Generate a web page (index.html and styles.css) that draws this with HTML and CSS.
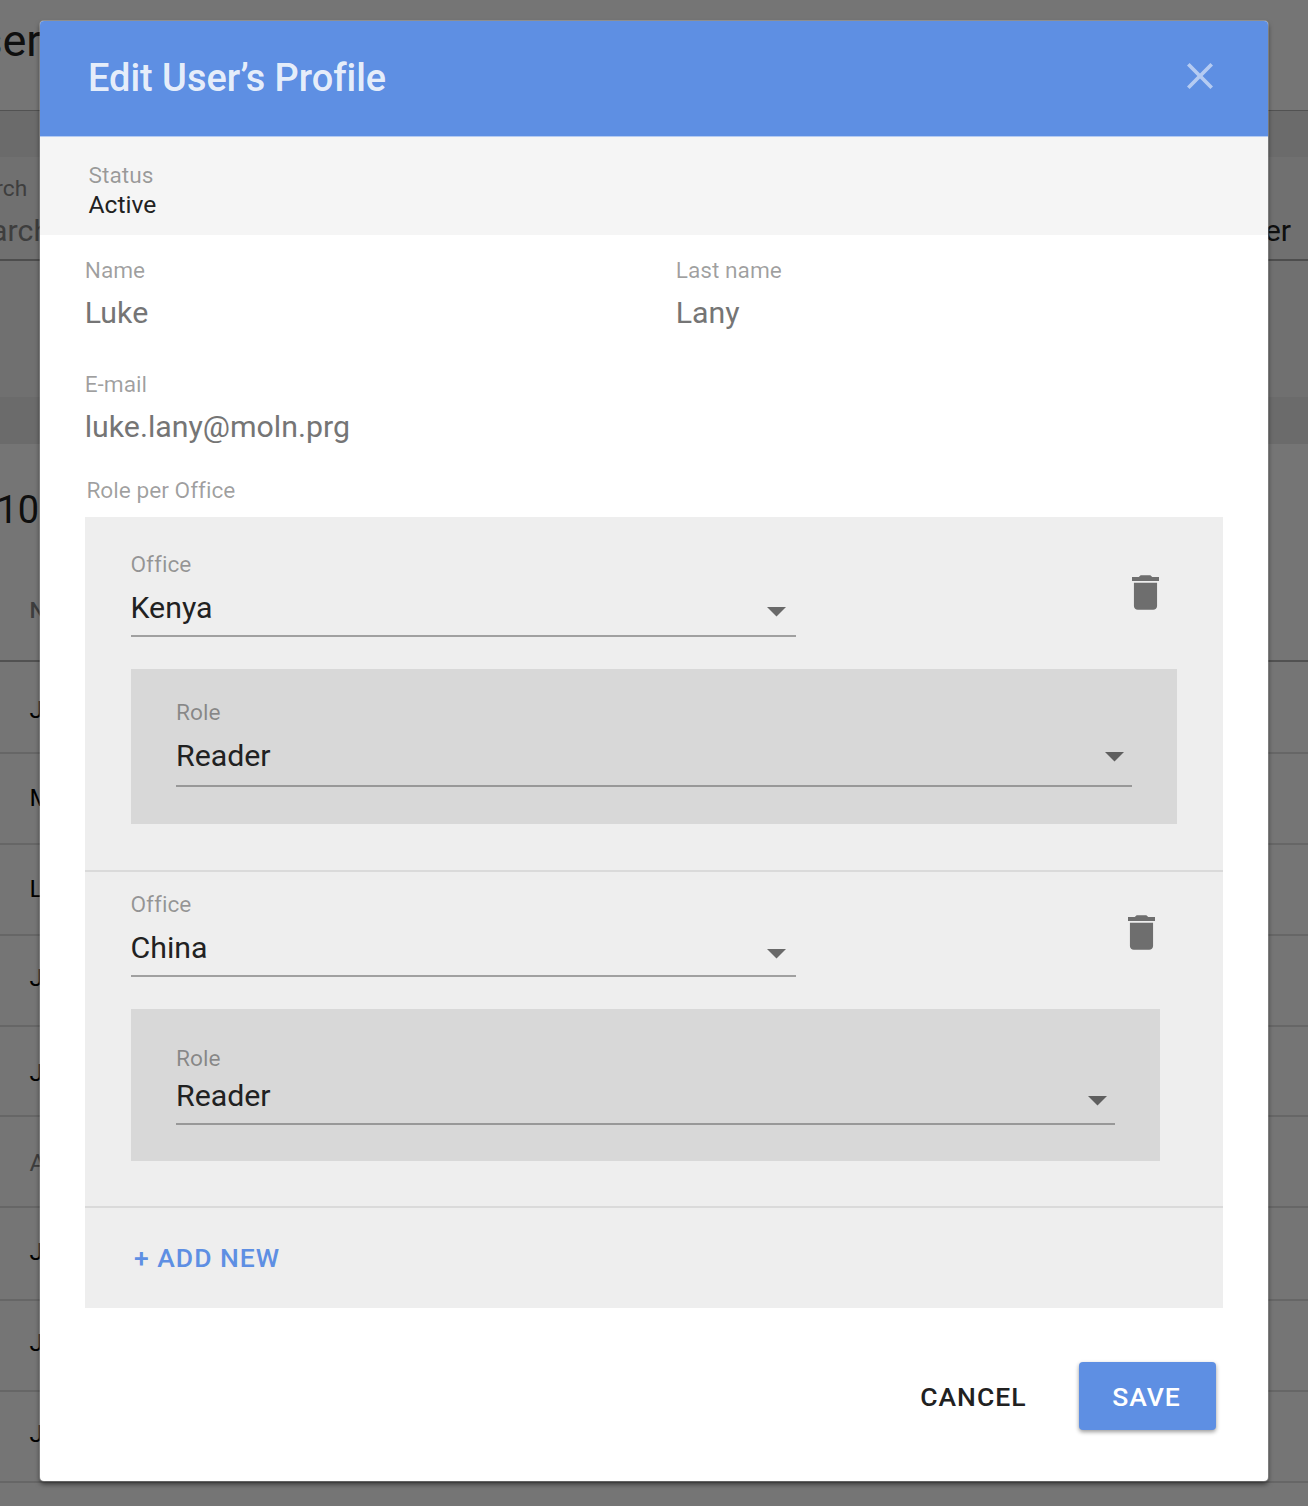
FILE: index.html
```html
<!DOCTYPE html>
<html lang="en">
<head>
<meta charset="utf-8">
<title>Edit User’s Profile</title>
<link rel="stylesheet" href="styles.css">
</head>
<body>
<div class="page" aria-hidden="true">
  <header class="page-header">Users</header>
  <section class="filters">
    <div class="filter-label">Search</div>
    <div class="filter-row"><span>Search</span><span class="filter-user">er</span></div>
  </section>
  <section class="list">
    <div class="list-count">10</div>
    <div class="list-head">N</div>
    <div class="list-row r1">J</div>
    <div class="list-row r2">M</div>
    <div class="list-row r3">L</div>
    <div class="list-row r4">J</div>
    <div class="list-row r5">J</div>
    <div class="list-row r6 muted">A</div>
    <div class="list-row r7">J</div>
    <div class="list-row r8">J</div>
    <div class="list-row r9">J</div>
  </section>
</div>

<div class="overlay">
  <main class="dialog" role="dialog">
    <header class="dialog-header">
      <h1>Edit User’s Profile</h1>
      <svg class="close" viewBox="5 5 14 14"><path d="M19 6.41L17.59 5 12 10.59 6.41 5 5 6.41 10.59 12 5 17.59 6.41 19 12 13.41 17.59 19 19 17.59 13.41 12z"/></svg>
    </header>
    <section class="status">
      <div class="label">Status</div>
      <div class="status-value">Active</div>
    </section>
    <section class="content">
      <div class="names">
        <div><div class="label">Name</div><div class="value">Luke</div></div>
        <div><div class="label">Last name</div><div class="value">Lany</div></div>
      </div>
      <div class="email"><div class="label">E-mail</div><div class="value">luke.lany@moln.prg</div></div>
      <div class="label roles-label">Role per Office</div>
      <div class="roles">
        <div class="item first">
          <div class="item-top">
            <div class="select office">
              <div class="label">Office</div>
              <div class="select-row"><span>Kenya</span><svg class="caret" viewBox="0 0 10 5"><path d="M0 0h10L5 5z"/></svg></div>
            </div>
            <svg class="trash" viewBox="5 3 14 18"><path d="M6 19c0 1.1.9 2 2 2h8c1.1 0 2-.9 2-2V7H6v12zM19 4h-3.5l-1-1h-5l-1 1H5v2h14V4z"/></svg>
          </div>
          <div class="role-card">
            <div class="select">
              <div class="label">Role</div>
              <div class="select-row"><span>Reader</span><svg class="caret" viewBox="0 0 10 5"><path d="M0 0h10L5 5z"/></svg></div>
            </div>
          </div>
        </div>
        <div class="item second">
          <div class="item-top">
            <div class="select office">
              <div class="label">Office</div>
              <div class="select-row"><span>China</span><svg class="caret" viewBox="0 0 10 5"><path d="M0 0h10L5 5z"/></svg></div>
            </div>
            <svg class="trash" viewBox="5 3 14 18"><path d="M6 19c0 1.1.9 2 2 2h8c1.1 0 2-.9 2-2V7H6v12zM19 4h-3.5l-1-1h-5l-1 1H5v2h14V4z"/></svg>
          </div>
          <div class="role-card">
            <div class="select">
              <div class="label">Role</div>
              <div class="select-row"><span>Reader</span><svg class="caret" viewBox="0 0 10 5"><path d="M0 0h10L5 5z"/></svg></div>
            </div>
          </div>
        </div>
        <div class="add">+ ADD NEW</div>
      </div>
    </section>
    <footer class="actions">
      <button class="cancel">CANCEL</button>
      <button class="save">SAVE</button>
    </footer>
  </main>
</div>
</body>
</html>
```
FILE: styles.css
```css
* { box-sizing: border-box; }
html, body { margin: 0; height: 1506px; overflow: hidden; }
body { font-family: Roboto, sans-serif; font-variant-ligatures: none; color: #212121; background: #e9e9e9; position: relative; }

/* page behind the dialog */
.page { height: 1506px; overflow: hidden; }
.page-header { height: 111px; padding-top: 13px; background: #fff; border-bottom: 1px solid #b4b4b4; font-size: 45px; line-height: 56px; text-indent: -50px; }
.filters { margin-top: 46px; height: 240px; padding-top: 18px; background: #f4f4f4; }
.filter-label { font-size: 22.7px; line-height: 28px; color: #888; text-indent: -42.5px; }
.filter-row { display: flex; justify-content: space-between; height: 58px; padding: 8px 17px 0 0; border-bottom: 2px solid #a8a8a8; font-size: 30.3px; line-height: 40px; color: #888; }
.filter-row span:first-child { margin-left: -43px; }
.filter-user { color: #222; }
.list { margin-top: 47px; height: 1062px; background: #fff; }
.list-count { height: 134px; padding-top: 42px; font-size: 38px; line-height: 48px; text-indent: -3.5px; }
.list-head { height: 84px; padding: 19px 0 0 29.5px; border-bottom: 2px solid #b0b0b0; font-size: 22.7px; font-weight: 500; line-height: 28px; color: #858585; }
.list-row { height: 91px; padding: 33px 0 0 29.5px; border-bottom: 2px solid #dedede; font-size: 24.6px; line-height: 30px; color: #000; }
.r1 { height: 92px; }
.r2 { padding-top: 29px; }
.r3 { padding-top: 29px; }
.r4 { padding-top: 27px; }
.r5 { padding-top: 31px; height: 90px; }
.r6 { padding-top: 31px; }
.r7 { padding-top: 29px; height: 93px; }
.r8 { padding-top: 27px; }
.r9 { padding-top: 27px; }
.muted { color: #858585; }

.overlay { position: absolute; inset: 0; padding: 21px 40px 25px; background: rgba(0, 0, 0, .54); }

/* dialog */
.dialog { width: 1228px; height: 1460px; overflow: visible; background: #fff; border-radius: 4px; box-shadow: 0 0 0 1px rgba(255, 255, 255, .22), 0 3px 5px rgba(0, 0, 0, .55); }
.dialog-header { display: flex; justify-content: space-between; height: 116px; padding: 33px 55px 0 48px; background: #5e8fe3; border-bottom: 1px solid #b4cbf2; border-radius: 4px 4px 0 0; }
h1 { margin: 0; font-size: 37.9px; font-weight: 500; line-height: 48px; color: rgba(255, 255, 255, .87); }
.close { width: 26px; height: 26px; margin-top: 9px; fill: rgba(255, 255, 255, .54); }
.status { height: 98px; padding: 25px 48.5px 0; background: #f5f5f5; }
.status-value { font-size: 24.6px; line-height: 30px; }
.label { font-size: 22.7px; line-height: 28px; color: rgba(0, 0, 0, .38); }
.value { margin-top: 8px; font-size: 30.3px; line-height: 40px; color: #757575; }
.content { padding: 22px 45px 0; }
.names { display: grid; grid-template-columns: 591px 1fr; margin-left: -.3px; }
.email { margin: 38px 0 0 -.3px; }
.roles-label { margin: 30px 0 12px 1.4px; }

.roles { width: 1138px; height: 791.4px; background: #eee; }
.item { padding-left: 45.5px; border-bottom: 2px solid #dadada; }
.first { height: 355px; padding-top: 34px; }
.second { height: 336px; padding-top: 19px; }
.item-top { display: flex; justify-content: space-between; align-items: flex-start; }
.select { height: 86px; border-bottom: 2px solid #a0a0a0; }
.office { width: 665px; }
.select-row { display: flex; justify-content: space-between; align-items: flex-start; margin-top: 9px; padding-right: 9.5px; font-size: 30.3px; line-height: 40px; }
.caret { width: 19px; height: 9.5px; margin-top: 19px; fill: rgba(0, 0, 0, .56); }
.trash { width: 27px; height: 35px; margin-top: 24px; fill: #6e6e6e; }
.first .trash { margin-right: 64.4px; }
.second .trash { margin-right: 68.4px; }
.role-card { margin-top: 31.5px; padding: 30.5px 45.5px 0; background: #d8d8d8; }
.role-card .select { height: 88px; border-color: #989898; }
.first .role-card { width: 1046.9px; height: 155.5px; }
.first .role-card .select-row { padding-right: 8px; }
.first .role-card .caret { margin-top: 16px; }
.second .caret { margin-top: 21px; }
.second .role-card { width: 1029.6px; height: 152px; padding-top: 36.5px; }
.second .role-card .select { height: 80.4px; }
.second .role-card .select-row { margin-top: 3px; padding-right: 7.5px; }
.second .role-card .caret { margin-top: 20px; }
.add { padding: 34px 0 0 49px; font-size: 26.5px; font-weight: 500; line-height: 32px; letter-spacing: 1px; color: #5e8fe3; }

.actions { display: flex; justify-content: flex-end; align-items: center; gap: 52px; padding: 53.6px 52.5px 0 0; }
button { padding: 0; border: 0; font: 500 26.5px/32px Roboto, sans-serif; letter-spacing: 1px; background: none; color: #212121; }
.cancel { padding-top: 2px; }
.save { width: 137px; height: 68px; padding: 2px 1px 0 0; border-radius: 4px; background: #5e8fe3; color: #fff; box-shadow: 0 2px 4px rgba(0, 0, 0, .4); }
```
